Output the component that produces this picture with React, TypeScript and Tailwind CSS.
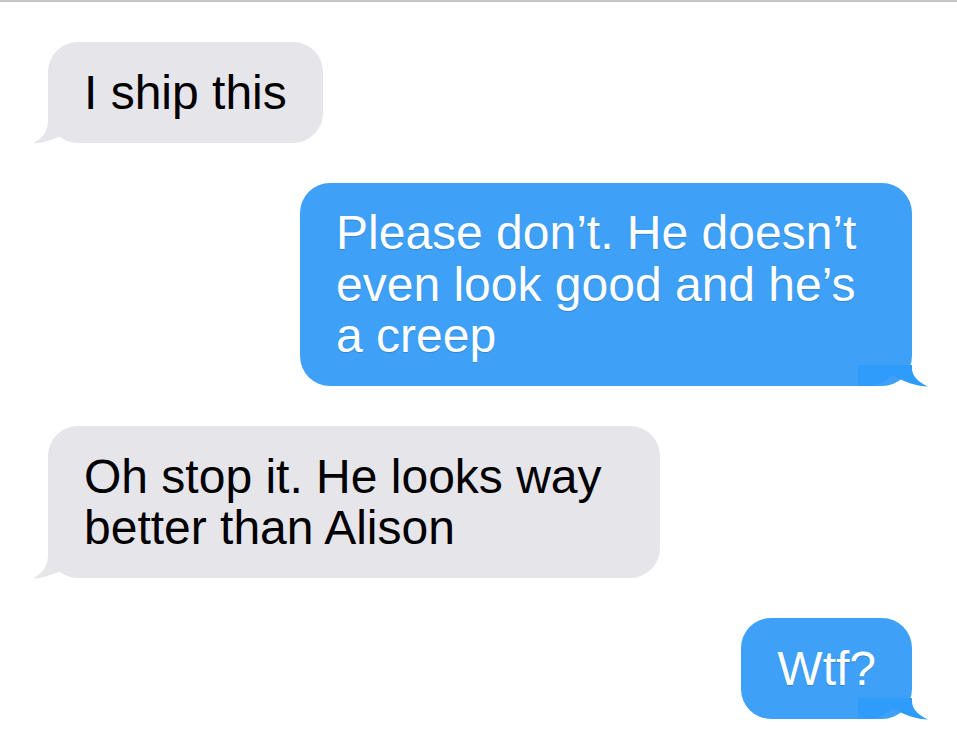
const messages = [
  { id: 1, from: 'them', text: 'I ship this' },
  { id: 2, from: 'me', text: 'Please don’t. He doesn’t even look good and he’s a creep' },
  { id: 3, from: 'them', text: 'Oh stop it. He looks way better than Alison' },
  { id: 4, from: 'me', text: 'Wtf?' },
]

function TheirTail() {
  return (
    <svg
      className="absolute left-[-16px] bottom-[-1px] w-[60px] h-[40px]"
      viewBox="0 0 60 40"
    >
      <path
        d="M16 0 L16 16 C16 27 11 34 1 39.5 C10 39.5 23 35 35 29 C42 35 48 39 58 39 L60 39 L60 0 Z"
        fill="#e5e5ea"
      />
    </svg>
  )
}

function MyTail() {
  return (
    <svg
      className="absolute right-[-16px] bottom-[-1px] w-[70px] h-[22px]"
      viewBox="0 0 70 22"
    >
      <path
        d="M0 0 H54 V3 C54 11 60 17 70 21.5 C60 21.5 46 17 34 10 C28 16 20 21 10 21 H0 Z"
        fill="#2f9cfb"
      />
    </svg>
  )
}

function Bubble({ from, text }: { from: string; text: string }) {
  const mine = from === 'me'
  return (
    <div
      className={
        mine
          ? 'relative self-end max-w-[612px] rounded-[30px] bg-[#3ea1f7] px-9 pt-[24.5px] pb-[24.5px] text-[48px] leading-[51.5px] text-white [text-shadow:0_1px_1px_rgba(0,0,0,0.18)]'
          : 'relative self-start max-w-[612px] rounded-[30px] bg-[#e5e5ea] px-9 pt-[24.5px] pb-[24.5px] text-[48px] leading-[51.5px] text-black'
      }
    >
      {mine ? <MyTail /> : <TheirTail />}
      <span className="relative">{text}</span>
    </div>
  )
}

export default function App() {
  return (
    <div className="min-h-screen bg-white border-t-2 border-[#c6c6c6] pl-12 pr-[45px] pt-10 flex flex-col gap-10 font-['Liberation_Sans',Arial,sans-serif]">
      {messages.map((m) => (
        <Bubble key={m.id} from={m.from} text={m.text} />
      ))}
    </div>
  )
}
